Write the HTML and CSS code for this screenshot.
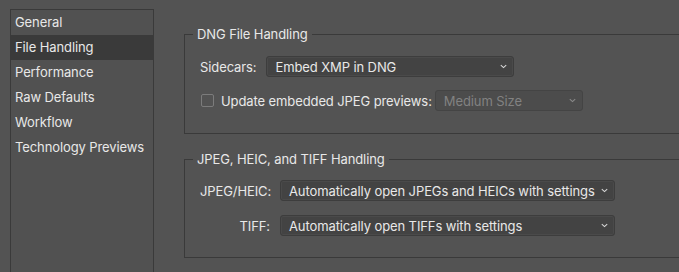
FILE: index.html
```html
<!DOCTYPE html>
<html>
<head>
<meta charset="utf-8">
<link rel="stylesheet" href="styles.css">
</head>
<body>
<div class="page">
  <nav class="sidebar">
    <div class="item">General</div>
    <div class="item selected">File Handling</div>
    <div class="item">Performance</div>
    <div class="item">Raw Defaults</div>
    <div class="item">Workflow</div>
    <div class="item">Technology Previews</div>
  </nav>
  <main class="main">
    <fieldset class="group group-dng">
      <legend>DNG File Handling</legend>
      <div class="row">
        <span class="label">Sidecars:</span>
        <div class="select select-sidecars"><span>Embed XMP in DNG</span><svg class="chev" width="7" height="5" viewBox="0 0 7 5"><path d="M0.8 1.2 L3.5 3.6 L6.2 1.2" fill="none" stroke="#d8d8d8" stroke-width="1.1"/></svg></div>
      </div>
      <div class="row row-check">
        <span class="checkbox"></span>
        <span class="label check-label">Update embedded JPEG previews:</span>
        <div class="select select-disabled"><span>Medium Size</span><svg class="chev" width="7" height="5" viewBox="0 0 7 5"><path d="M0.8 1.2 L3.5 3.6 L6.2 1.2" fill="none" stroke="#8a8a8a" stroke-width="1.1"/></svg></div>
      </div>
    </fieldset>
    <fieldset class="group group-jpeg">
      <legend>JPEG, HEIC, and TIFF Handling</legend>
      <div class="grid">
        <span class="label right">JPEG/HEIC:</span>
        <div class="select select-wide"><span>Automatically open JPEGs and HEICs with settings</span><svg class="chev" width="7" height="5" viewBox="0 0 7 5"><path d="M0.8 1.2 L3.5 3.6 L6.2 1.2" fill="none" stroke="#d8d8d8" stroke-width="1.1"/></svg></div>
        <span class="label right">TIFF:</span>
        <div class="select select-wide"><span>Automatically open TIFFs with settings</span><svg class="chev" width="7" height="5" viewBox="0 0 7 5"><path d="M0.8 1.2 L3.5 3.6 L6.2 1.2" fill="none" stroke="#d8d8d8" stroke-width="1.1"/></svg></div>
      </div>
    </fieldset>
  </main>
</div>
</body>
</html>
```
FILE: styles.css
```css
html, body {
  margin: 0;
  padding: 0;
  background: #535353;
  overflow: hidden;
}
body {
  font-family: "Inter", "Liberation Sans", sans-serif;
  font-size: 13px;
  letter-spacing: -0.1px;
  color: #e8e8e8;
  width: 679px;
  height: 272px;
}
.page {
  display: flex;
  align-items: flex-start;
  width: 679px;
  height: 272px;
}
.sidebar {
  margin-left: 10px;
  margin-top: 9px;
  height: 263px;
  box-sizing: border-box;
  width: 144px;
  border: 1px solid #3a3a3a;
  border-bottom: none;
  background: #515151;
  flex: none;
}
.item {
  height: 25px;
  line-height: 25px;
  padding-left: 4px;
  white-space: nowrap;
}
.item.selected {
  background: #3a3a3a;
}
.main {
  padding-left: 30px;
  padding-top: 27px;
  flex: 1;
  min-width: 0;
}
.group {
  margin: 0;
  border: 1px solid #3a3a3a;
  border-right: none;
  padding: 0 0 0 15px;
  min-width: 0;
}
.group legend {
  margin-left: -7px;
  padding: 0 4px;
  line-height: 15px;
  height: 15px;
}
.group-dng {
  padding-top: 14px;
  padding-bottom: 22px;
}
.group-jpeg {
  margin-top: 18px;
  padding-top: 13px;
  padding-bottom: 21px;
}
.row {
  display: flex;
  align-items: center;
  height: 21px;
}
.row + .row {
  margin-top: 13px;
}
.label {
  white-space: nowrap;
}
.row .label {
  margin-right: 10px;
}
.checkbox {
  width: 11px;
  height: 11px;
  border: 1px solid #7c7c7c;
  border-radius: 2px;
  margin-left: 1px;
  margin-right: 7px;
  box-sizing: content-box;
  flex: none;
}
.row .check-label {
  margin-right: 3px;
}
.grid {
  display: grid;
  grid-template-columns: 70px auto;
  column-gap: 10px;
  row-gap: 14px;
  align-items: center;
  width: 415px;
}
.right {
  text-align: right;
}
.select {
  box-sizing: border-box;
  height: 21px;
  border: 1px solid #3d3d3d;
  border-radius: 3px;
  background: #434343;
  display: flex;
  align-items: center;
  justify-content: space-between;
  padding: 0 6px 0 8px;
  white-space: nowrap;
  box-shadow: inset 0 0 0 1px #4a4a4a;
  flex: none;
}
.select-sidecars {
  width: 248px;
}
.select-disabled {
  width: 148px;
  background: #4c4c4c;
  border-color: #444444;
  color: #828282;
  box-shadow: none;
}
.select-wide {
  width: 335px;
}
.chev {
  flex: none;
}
```
